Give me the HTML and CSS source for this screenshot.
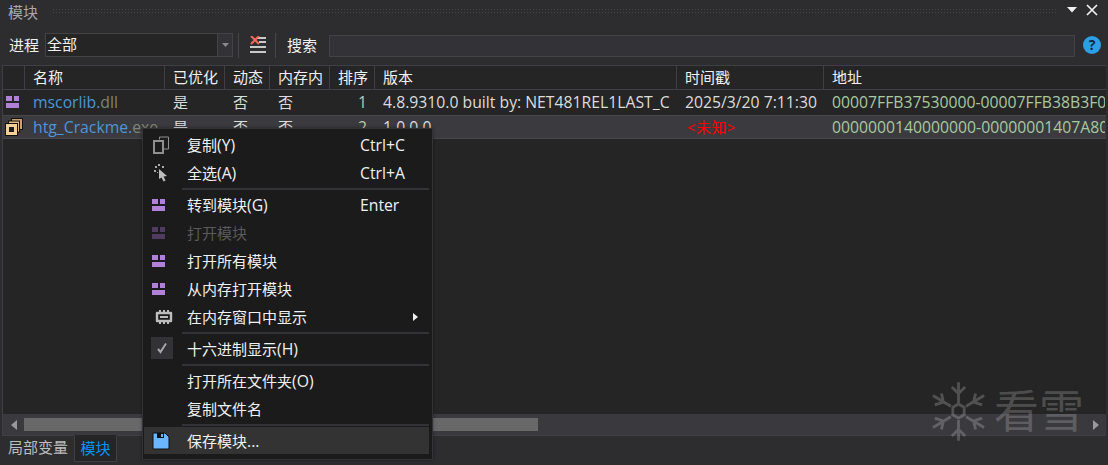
FILE: index.html
```html
<!DOCTYPE html>
<html lang="zh">
<head>
<meta charset="utf-8">
<title>模块</title>
<link rel="stylesheet" href="styles.css">
</head>
<body>
<div class="window">
  <div class="titlebar">
    <span class="title">模块</span>
    <span class="gripper"></span>
    <svg class="t-arrow" width="10" height="6" viewBox="0 0 10 6"><path d="M0 0h10L5 5.500z" fill="#f1f1f1"/></svg>
    <svg class="t-close" width="12" height="12" viewBox="0 0 12 12"><path d="M1 1l10 10M11 1L1 11" stroke="#f1f1f1" stroke-width="1.700" fill="none"/></svg>
  </div>
  <div class="toolbar">
    <span class="label">进程</span>
    <div class="combo"><span class="combo-text">全部</span><span class="combo-btn"><svg width="7" height="4" viewBox="0 0 7 4"><path d="M0 0h7L3.500 4z" fill="#8a8a8d"/></svg></span></div>
    <span class="tsep"></span>
    <svg class="clear-icon" width="16" height="18" viewBox="0 0 16 18">
      <path d="M7 1h9v2H7zM9 5h7v2H9zM0 10h16v2H0zM0 15h16v2H0z" fill="#c8c8c8"/>
      <path d="M1 0l8 8M9 0L1 8" stroke="#f0695c" stroke-width="2" fill="none"/>
    </svg>
    <span class="tsep tsep-b"></span>
    <span class="label label-search">搜索</span>
    <div class="search"></div>
    <svg class="help" width="18" height="18" viewBox="0 0 18 18"><circle cx="9" cy="9" r="9" fill="#2d9fe6"/><text x="9" y="14" text-anchor="middle" class="help-q">?</text></svg>
  </div>
  <div class="grid">
    <div class="row head">
      <div class="cell"></div>
      <div class="cell">名称</div>
      <div class="cell">已优化</div>
      <div class="cell">动态</div>
      <div class="cell">内存内</div>
      <div class="cell">排序</div>
      <div class="cell">版本</div>
      <div class="cell">时间戳</div>
      <div class="cell">地址</div>
    </div>
    <div class="row item">
      <div class="cell cell-icon">
        <svg class="mod-row" width="13" height="12" viewBox="0 0 13 12"><path d="M0 0h6v5H0zM8 0h5v5H8zM0 7h13v5H0z" fill="#b180d7"/></svg>
      </div>
      <div class="cell lt"><span class="blue">mscorlib.</span><span class="ext">dll</span></div>
      <div class="cell">是</div>
      <div class="cell">否</div>
      <div class="cell">否</div>
      <div class="cell num lt">1</div>
      <div class="cell lt">4.8.9310.0 built by: NET481REL1LAST_C</div>
      <div class="cell lt">2025/3/20 7:11:30</div>
      <div class="cell addr lt">00007FFB37530000-00007FFB38B3F000</div>
    </div>
    <div class="row item selected">
      <div class="cell cell-icon">
        <svg width="18" height="18" viewBox="0 0 18 18">
          <rect x="6.500" y="0.500" width="11" height="11" fill="#c9a26d" stroke="#111"/>
          <rect x="3.500" y="3" width="11" height="11" fill="#e5b97f" stroke="#111"/>
          <rect x="0.500" y="5.500" width="12" height="12" fill="#f4cf9a" stroke="#111"/>
          <rect x="4" y="9" width="5" height="5" fill="#1e1e1e"/>
        </svg>
      </div>
      <div class="cell lt"><span class="blue">htg_Crackme.</span><span class="ext">exe</span></div>
      <div class="cell">是</div>
      <div class="cell">否</div>
      <div class="cell">否</div>
      <div class="cell num lt">2</div>
      <div class="cell lt">1.0.0.0</div>
      <div class="cell unknown">&lt;未知&gt;</div>
      <div class="cell addr lt">0000000140000000-00000001407A8000</div>
    </div>
    <div class="grid-fill"></div>
    <div class="hscroll">
      <svg class="sc-left" width="6" height="10" viewBox="0 0 6 10"><path d="M6 0v10L0 5z" fill="#999"/></svg>
      <div class="thumb"></div>
      <svg class="sc-right" width="6" height="10" viewBox="0 0 6 10"><path d="M0 0v10l6-5z" fill="#999"/></svg>
    </div>
  </div>
  <div class="tabs">
    <span class="tab">局部变量</span>
    <span class="tab tab-active">模块</span>
  </div>

  <div class="watermark">
    <svg class="flake" width="53" height="59" viewBox="0 0 56 62">
      <g stroke="#fff" stroke-width="3" fill="none">
        <path d="M28 0v22M28 40v22M21 5l7 7 7-7M21 57l7-7 7 7"/>
        <path d="M1 14l19 11.500M36 36.500L55 48M3 24l9-3-2-9M53 38l-9 3 2 9"/>
        <path d="M55 14L36 25.500M20 36.500L1 48M53 24l-9-3 2-9M3 38l9 3-2 9"/>
        <path d="M28 23l6 3.500v8l-6 3.500-6-3.500v-8z"/>
      </g>
    </svg>
    <span class="wm-text">看雪</span>
  </div>

  <div class="menu">
    <div class="mi">
      <span class="mi-icon"><svg width="16" height="18" viewBox="0 0 16 18"><path d="M6.500 3.500V1h9v12H11" stroke="#8f8f8f" fill="none"/><rect x="1" y="5" width="9" height="12" stroke="#8f8f8f" stroke-width="2" fill="none"/></svg></span>
      <span class="mi-text">复制<span class="lt">(Y)</span></span><span class="mi-key lt">Ctrl+C</span>
    </div>
    <div class="mi">
      <span class="mi-icon"><svg width="14" height="18" viewBox="0 0 14 18"><path d="M5 5l8 7-3.500.5 2 4-2 1-2-4L5 15z" fill="#bdbdbd"/><path d="M1 2h2v2H1zM4 0h2v2H4zM8 2h2v2H8zM0 6h2v2H0zM3 8h1v1H3z" fill="#aaa"/></svg></span>
      <span class="mi-text">全选<span class="lt">(A)</span></span><span class="mi-key lt">Ctrl+A</span>
    </div>
    <div class="msep"></div>
    <div class="mi">
      <span class="mi-icon"><svg class="mod" width="13" height="12" viewBox="0 0 13 12"><path d="M0 0h6v5H0zM8 0h5v5H8zM0 7h13v5H0z" fill="#b180d7"/></svg></span>
      <span class="mi-text">转到模块<span class="lt">(G)</span></span><span class="mi-key lt">Enter</span>
    </div>
    <div class="mi disabled">
      <span class="mi-icon"><svg class="mod" width="13" height="12" viewBox="0 0 13 12"><path d="M0 0h6v5H0zM8 0h5v5H8zM0 7h13v5H0z" fill="#4f3c5f"/></svg></span>
      <span class="mi-text">打开模块</span>
    </div>
    <div class="mi">
      <span class="mi-icon"><svg class="mod" width="13" height="12" viewBox="0 0 13 12"><path d="M0 0h6v5H0zM8 0h5v5H8zM0 7h13v5H0z" fill="#b180d7"/></svg></span>
      <span class="mi-text">打开所有模块</span>
    </div>
    <div class="mi">
      <span class="mi-icon"><svg class="mod" width="13" height="12" viewBox="0 0 13 12"><path d="M0 0h6v5H0zM8 0h5v5H8zM0 7h13v5H0z" fill="#b180d7"/></svg></span>
      <span class="mi-text">从内存打开模块</span>
    </div>
    <div class="mi">
      <span class="mi-icon"><svg class="chip" width="18" height="14" viewBox="0 0 18 14"><path d="M2 3h14v8H2z" fill="none" stroke="#bdbdbd" stroke-width="2.400" stroke-linejoin="round"/><path d="M5 6h8v2H5z" fill="#bdbdbd"/><path d="M4 0h2v2H4zM8 0h2v2H8zM12 0h2v2h-2zM4 12h2v2H4zM8 12h2v2H8zM12 12h2v2h-2z" fill="#bdbdbd"/></svg></span>
      <span class="mi-text">在内存窗口中显示</span>
      <svg class="mi-sub" width="5" height="8" viewBox="0 0 5 8"><path d="M0 0v8l5-4z" fill="#f1f1f1"/></svg>
    </div>
    <div class="msep"></div>
    <div class="mi">
      <span class="mi-icon"><span class="checkbox"><svg width="12" height="12" viewBox="0 0 12 12"><path d="M2 7l2.500 3L10 1.500" stroke="#a8a8a8" stroke-width="2" fill="none"/></svg></span></span>
      <span class="mi-text">十六进制显示<span class="lt">(H)</span></span>
    </div>
    <div class="msep"></div>
    <div class="mi"><span class="mi-icon"></span><span class="mi-text">打开所在文件夹<span class="lt">(O)</span></span></div>
    <div class="mi"><span class="mi-icon"></span><span class="mi-text">复制文件名</span></div>
    <div class="msep"></div>
    <div class="mi hover">
      <span class="mi-icon"><svg width="18" height="18" viewBox="0 0 18 18"><path d="M1 1h12l4 4v12H1z" fill="#6cb6ff" stroke="#111"/><path d="M5 1h7v5H5z" fill="#111"/><path d="M9 2h2v3H9z" fill="#6cb6ff"/></svg></span>
      <span class="mi-text">保存模块<span class="lt">...</span></span>
    </div>
  </div>
</div>
</body>
</html>
```
FILE: styles.css
```css
* { box-sizing: border-box; }
html, body { margin: 0; padding: 0; }
body {
  width: 1108px;
  height: 465px;
  overflow: hidden;
  background: #2d2d30;
  color: #dcdcdc;
  font-family: "Open Sans", "Noto Sans CJK SC", sans-serif;
  font-size: 15px;
}
svg { display: block; flex: none; }
.lt { font-size: 15.75px; }
.window {
  position: relative;
  width: 1108px;
  height: 465px;
  display: flex;
  flex-direction: column;
  padding-left: 2px;
}
.titlebar {
  height: 24px;
  display: flex;
  align-items: center;
  padding-left: 6px;
  flex: none;
}
.title { color: #a9a9ab; line-height: 20px; margin-top: -1px; }
.gripper {
  flex: 1;
  height: 6px;
  margin: -2px 10px 0 14px;
  background-image: radial-gradient(#47474b 0.8px, transparent 1px);
  background-size: 3px 3px;
}
.t-arrow { margin: -4px 0 0 0; }
.t-close { margin: -4px 10px 0 9px; }
.toolbar {
  height: 41px;
  padding: 9px 7px 8px 7px;
  display: flex;
  align-items: center;
  flex: none;
}
.label { color: #f1f1f1; line-height: 24px; width: 30px; flex: none; margin-right: 6px; }
.label-search { margin: 0 12px 0 11px; }
.combo {
  width: 188px;
  height: 24px;
  display: flex;
  background: #252526;
  border: 1px solid #434346;
}
.combo-text { flex: 1; padding-left: 1px; line-height: 21px; color: #f1f1f1; }
.combo-btn {
  width: 15px;
  border-left: 1px solid #434346;
  display: flex;
  align-items: center;
  justify-content: center;
  background: #333337;
}
.tsep { width: 1px; height: 25px; background: #46464a; margin: 0 11px 0 5px; flex: none; }
.tsep-b { margin: 0 0 0 9px; }
.search { flex: 1; height: 22px; background: #333337; border: 1px solid #434346; margin-top: 1px; }
.help { margin-left: 8px; margin-right: 0; }
.help-q { font: bold 14px "Open Sans", sans-serif; fill: #0e2a40; }
.grid {
  flex: none;
  height: 371px;
  border-left: 1px solid #3f3f46;
  border-bottom: 1px solid #3f3f46;
  border-top: 1px solid #3f3f46;
  background: #252526;
  display: flex;
  flex-direction: column;
  width: 1104px;
  overflow: hidden;
}
.row {
  display: grid;
  grid-template-columns: 22px 140px 60px 45px 60px 45px 302px 147px 281px;
  flex: none;
}
.cell {
  padding-left: 8px;
  white-space: nowrap;
  overflow: hidden;
  min-width: 0;
}
.head { height: 24px; border-bottom: 1px solid #3f3f46; line-height: 22px; color: #f1f1f1; }
.head .cell { border-right: 1px solid #3f3f46; }
.head .cell:last-child { border-right: 0; }
.item { height: 25px; line-height: 25px; }
.selected {
  height: 24px;
  line-height: 22px;
  background: #3a3a3f;
  border-top: 1px solid #46464a;
  border-bottom: 1px solid #46464a;
}
.cell-icon { padding-left: 2px; display: flex; align-items: center; }
.mod-row { margin-left: 1px; margin-top: -1px; }
.blue { color: #4d96d8; }
.ext { color: #7f8576; }
.num { text-align: right; padding-right: 8px; color: #b5cea8; }
.addr { color: #a9c9a0; }
.unknown { color: #ff0000; padding-left: 10px; letter-spacing: 0.4px; }
.grid-fill { flex: 1; }
.hscroll {
  height: 21px;
  flex: none;
  background: #3a3a3e;
  display: flex;
  align-items: center;
  padding: 0 7px 0 8px;
}
.thumb {
  width: 514px;
  height: 13px;
  margin: 0 auto 0 7px;
  background: #686868;
}
.tabs { flex: 1; display: flex; padding-left: 6px; align-items: flex-start; margin-top: -1px; }
.tab { color: #bdbdbd; line-height: 25px; height: 27px; margin-right: 6px; }
.tab-active {
  color: #0097fb;
  background: #252526;
  width: 43px;
  text-align: center;
  border: 1px solid #3f3f46;
  border-top-color: #252526;
}
.watermark {
  position: absolute;
  left: 932px;
  top: 381px;
  display: flex;
  align-items: center;
  gap: 9px;
  pointer-events: none;
}
.flake { opacity: 0.2; }
.wm-text { font-size: 45px; line-height: 60px; color: rgba(255, 255, 255, 0.2); font-weight: 400; }
.menu {
  position: absolute;
  left: 142px;
  top: 128px;
  width: 291px;
  height: 332px;
  background: #1b1b1c;
  border: 1px solid #333337;
  padding: 2px 3px 1px 1px;
  box-shadow: 0 0 3px rgba(0, 0, 0, 0.4);
}
.mi {
  height: 28px;
  display: flex;
  align-items: center;
  color: #f1f1f1;
  position: relative;
  line-height: 20px;
}
.mi .lt { line-height: 1; }
.mi-icon { width: 43px; flex: none; display: flex; justify-content: center; align-items: center; padding-right: 10px; }
.mod { margin-right: 5px; }
.chip { margin-left: 6px; }
.mi-text { width: 173px; flex: none; white-space: nowrap; }
.mi-key { flex: none; padding-top: 2px; }
.mi-sub { position: absolute; left: 269px; top: 10px; }
.disabled { color: #5a5a5a; }
.msep { height: 4px; padding: 1px 0; margin: 0 0 0 38px; background: linear-gradient(#333337, #333337) content-box; }
.checkbox { width: 22px; height: 22px; background: #333337; display: flex; align-items: center; justify-content: center; margin-top: -2px; margin-left: 2px; }
.hover { background: #333334; height: 27px; }
```
